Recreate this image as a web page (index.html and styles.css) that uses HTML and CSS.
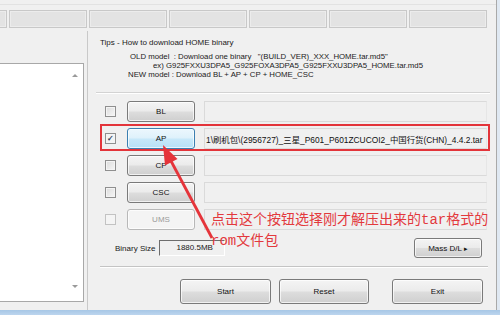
FILE: index.html
```html
<!DOCTYPE html>
<html>
<head>
<meta charset="utf-8">
<link rel="stylesheet" href="styles.css">
</head>
<body>
<div class="screen">
  <div class="window-row">
    <div class="window">
      <div class="topline"></div>
      <div class="tabs">
        <div class="tab"></div><div class="tab"></div><div class="tab"></div><div class="tab"></div><div class="tab"></div><div class="tab"></div><div class="tab"></div>
      </div>
      <div class="main">
        <div class="leftcol">
          <div class="listbox">
            <div class="scroll"><span class="arr up"></span><span class="arr down"></span></div>
          </div>
        </div>
        <div class="rightcol">
          <div class="tips">
            <div class="tips-title">Tips - How to download HOME binary</div>
            <div class="tips-line old">OLD model  : Download one binary   "(BUILD_VER)_XXX_HOME.tar.md5"</div>
            <div class="tips-line ex">ex) G925FXXU3DPA5_G925FOXA3DPA5_G925FXXU3DPA5_HOME.tar.md5</div>
            <div class="tips-line new">NEW model : Download BL + AP + CP + HOME_CSC</div>
          </div>
          <div class="files">
            <div class="row"><span class="chk"></span><button class="btn">BL</button><div class="field"></div></div>
            <div class="row"><span class="chk checked">✓</span><button class="btn focus">AP</button><div class="field"><span class="path">1\刷机包\(2956727)_三星_P601_P601ZCUCOI2_中国行货(CHN)_4.4.2.tar</span></div></div>
            <div class="row"><span class="chk"></span><button class="btn">CP</button><div class="field"></div></div>
            <div class="row"><span class="chk"></span><button class="btn">CSC</button><div class="field"></div></div>
            <div class="row"><span class="chk disabled"></span><button class="btn disabled">UMS</button><div class="field"></div></div>
            <div class="sizerow">
              <span class="size-label">Binary Size</span>
              <span class="size-field">1880.5MB</span>
              <button class="btn mass">Mass D/L <span class="tri">▸</span></button>
            </div>
            <div class="sep"></div>
            <div class="actions">
              <button class="btn big">Start</button>
              <button class="btn big">Reset</button>
              <button class="btn big exit">Exit</button>
            </div>
          </div>
        </div>
      </div>
    </div>
    <div class="frame-side"></div>
  </div>
  <div class="frame-bottom"></div>

  <div class="callout-box"></div>
  <svg class="arrow" width="500" height="315" viewBox="0 0 500 315">
    <line x1="212" y1="238" x2="171" y2="161" stroke="#e5343a" stroke-width="2.8"/>
    <polygon points="163,145 177.5,159 165,165.5" fill="#e5343a"/>
  </svg>
  <div class="note">
    <div>点击这个按钮选择刚才解压出来的<span class="mono">tar</span>格式的</div>
    <div><span class="mono">rom</span>文件包</div>
  </div>
</div>
</body>
</html>
```
FILE: styles.css
```css
* { box-sizing: border-box; }
html, body { margin: 0; padding: 0; }
body {
  width: 500px;
  height: 315px;
  overflow: hidden;
  background: #f0f0f0;
  font-family: "Liberation Sans", Arial, sans-serif;
  font-size: 8px;
  color: #1a1a1a;
}
.screen { position: relative; width: 500px; height: 315px; display: flex; flex-direction: column; }
.window-row { display: flex; height: 310px; }
.window { width: 497px; border-right: 1px solid #a9a9a9; background: #f0f0f0; display: flex; flex-direction: column; }
.frame-side { flex: 1; background: #dfe8f2; }
.frame-bottom { height: 5px; background: linear-gradient(#a7c7e6, #bcd5ee); }

.topline { height: 10px; border-top: 4px solid #f0f0f0; box-shadow: inset 0 1px 0 #e2e2e2; }
.tabs { display: flex; gap: 2px; margin-left: -71px; height: 18px; }
.tab { flex: 0 0 78px; height: 18px; border: 1px solid #c8c8c8; background: #e3e3e3; box-shadow: inset 0 0 0 1px #ececec; }

.main { display: grid; grid-template-columns: 88px 1fr; margin-top: 3px; flex: 1; }
.leftcol { border-right: 1px solid #c9c9c9; padding-top: 32px; }
.listbox {
  position: relative;
  width: 85px; height: 239px; margin-left: -1px;
  background: #fff; border: 1px solid #a8a8a8;
  display: flex; justify-content: flex-end;
}
.scroll { width: 16px; display: flex; flex-direction: column; justify-content: space-between; align-items: center; padding: 10px 0 13px; }
.arr { width: 0; height: 0; border-left: 3px solid transparent; border-right: 3px solid transparent; }
.arr.up { border-bottom: 3px solid #9a9a9a; }
.arr.down { border-top: 3px solid #9a9a9a; }

.rightcol { display: flex; flex-direction: column; }
.tips {
  margin: 0 6px 0 8px; padding-top: 7px; height: 62px;
  border-bottom: 1px solid #d3d3d3; box-shadow: 0 1px 0 #fff;
}
.tips-title { padding-left: 4px; line-height: 10px; margin-bottom: 4px; }
.tips-line { line-height: 9px; white-space: pre; font-size: 7.8px; }
.tips-line.old { padding-left: 34px; }
.tips-line.ex { padding-left: 57px; }
.tips-line.new { padding-left: 32px; }

.files { margin-top: 8px; display: flex; flex-direction: column; }
.row { display: flex; align-items: center; height: 21px; margin-bottom: 6px; padding-left: 17px; }
.chk {
  width: 11px; height: 11px; border: 1px solid #8f8f8f;
  background: linear-gradient(135deg, #dcdcdc, #f6f6f6);
  box-shadow: inset 0 0 0 1px #f4f4f4;
  margin-right: 11px; font-size: 8px; line-height: 9px; text-align: center; color: #2a3a5a;
}
.chk.checked { background: #f3f3f3; font-weight: bold; }
.chk.disabled { border-color: #c2c2c2; background: #f4f4f4; }
.btn {
  font-family: "Liberation Sans", Arial, sans-serif; font-size: 8px; color: #111;
  width: 68px; height: 21px; padding: 0;
  border: 1px solid #7a7a7a; border-radius: 3px;
  background: linear-gradient(#f4f4f4 0%, #ebebeb 48%, #dddddd 52%, #cfcfcf 100%);
  box-shadow: inset 0 0 0 1px rgba(255,255,255,0.7);
}
.btn.focus { border-color: #3c7fb1; background: linear-gradient(#ecf7fd 0%, #def1fb 48%, #c7e8f9 52%, #b7e1f7 100%); }
.btn.disabled { border-color: #b8b8b8; background: #f4f4f4; color: #9a9a9a; }
.field {
  margin-left: 9px; width: 283px; height: 21px;
  border: 1px solid #dadada; border-right-color: #e6e6e6; background: #f0f0f0;
  overflow: hidden; white-space: nowrap; display: flex; align-items: center;
}
.path { font-family: "Liberation Sans", "Noto Sans CJK SC", sans-serif; font-size: 8.4px; padding-left: 1px; color: #111; }

.sizerow { display: flex; align-items: center; height: 20px; margin-top: 2px; padding-left: 27px; }
.size-label { margin-right: 4px; }
.size-field {
  width: 66px; height: 16px; line-height: 14px; padding-left: 16px;
  border-top: 1px solid #6d6d6d; border-left: 1px solid #6d6d6d;
  border-bottom: 1px solid #fff; border-right: 1px solid #fff; background: #f0f0f0;
}
.btn.mass { margin-left: auto; margin-right: 14px; height: 20px; }
.tri { font-size: 7px; }
.sep { margin: 8px 8px 0 12px; height: 2px; border-top: 1px solid #c4c4c4; border-bottom: 1px solid #fff; }
.actions { display: flex; margin-top: 11px; padding-left: 92px; }
.btn.big { width: 91px; height: 25px; margin-right: 8px; }
.btn.big:nth-child(2) { width: 90px; margin-right: 23px; }

.callout-box { position: absolute; left: 100px; top: 124px; width: 390px; height: 27px; border: 2px solid #e3343a; }
.arrow { position: absolute; left: 0; top: 0; pointer-events: none; }
.note {
  position: absolute; left: 211px; top: 209px;
  font-family: "Noto Sans CJK SC", sans-serif; font-size: 14px; line-height: 19px;
  color: #e3393d; white-space: nowrap;
}
.mono { font-family: "Liberation Mono", monospace; }
```
